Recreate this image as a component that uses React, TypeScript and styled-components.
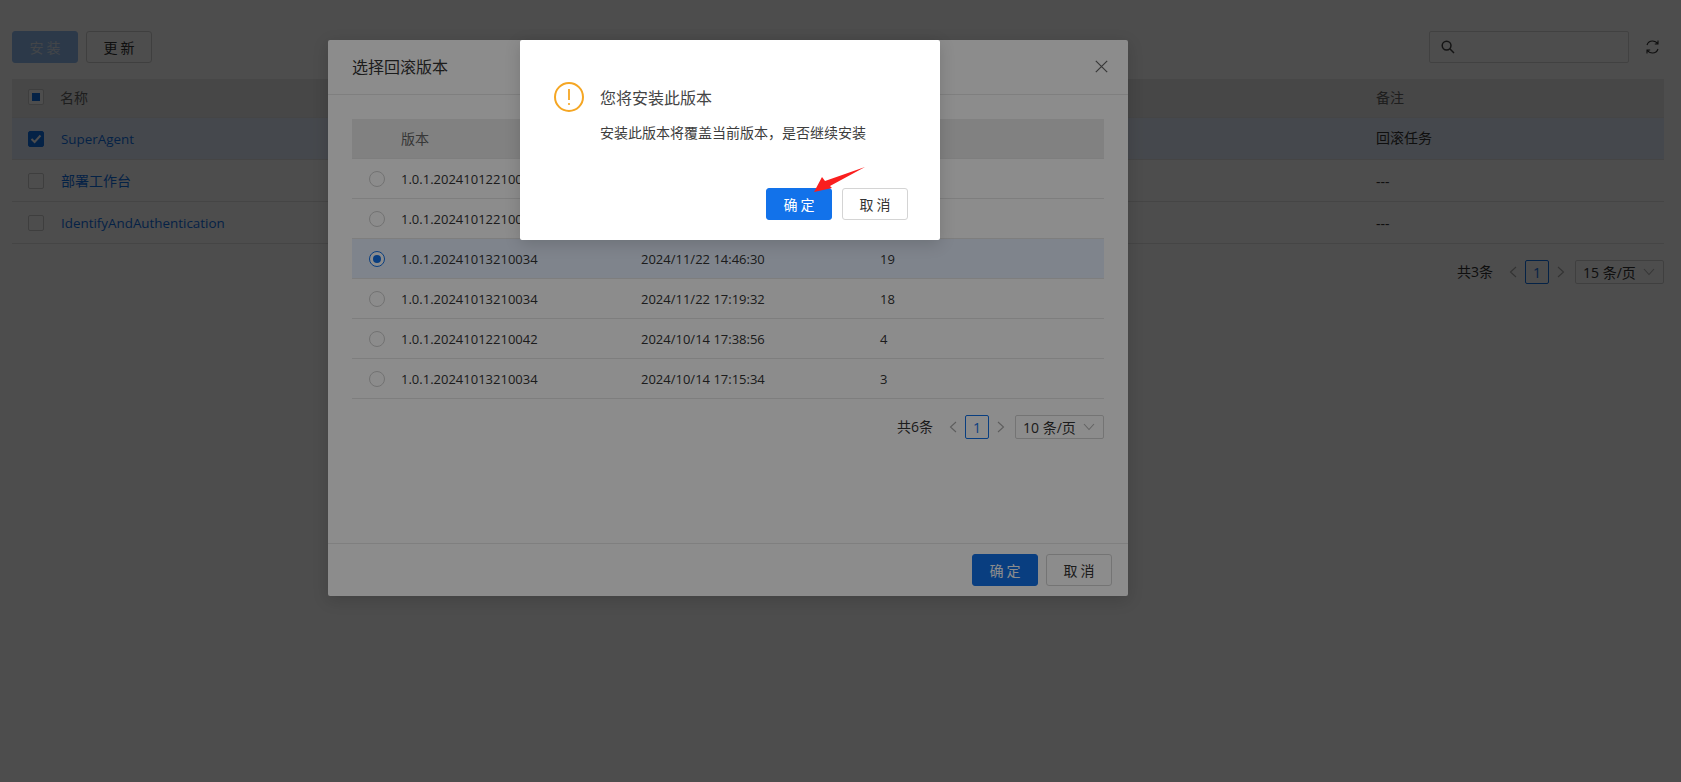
import React from "react";
import styled, { createGlobalStyle } from "styled-components";

const FONT = `"Open Sans", "Noto Sans CJK SC", sans-serif`;
const BLUE = "#1272ea";

const Global = createGlobalStyle`
  html, body { margin: 0; padding: 0; background: #fff; }
  body { font-family: ${FONT}; font-size: 14px; color: #333; }
  * { box-sizing: border-box; }
`;

const Screen = styled.div`
  position: relative;
  width: 1681px;
  height: 782px;
  overflow: hidden;
  background: #fff;
`;

const Page = styled.main`
  padding: 31px 17px 0 12px;
`;

const Toolbar = styled.div`
  display: flex;
  align-items: center;
  gap: 8px;
  height: 32px;
  margin-bottom: 16px;
`;

const Btn = styled.button<{ $primary?: boolean; $disabled?: boolean }>`
  width: 66px;
  height: 32px;
  padding: 0;
  border-radius: 3px;
  border: 1px solid ${(p) => (p.$primary ? BLUE : "#d4d4d4")};
  background: ${(p) => (p.$primary ? BLUE : "#fff")};
  color: ${(p) => (p.$disabled ? "#b8cbe2" : p.$primary ? "#fff" : "#333")};
  font-family: ${FONT};
  font-size: 14px;
  letter-spacing: 3px;
  text-indent: 3px;
  opacity: ${(p) => (p.$disabled ? 0.45 : 1)};
`;

const Spacer = styled.div`
  flex: 1;
`;

const SearchBox = styled.div`
  width: 200px;
  height: 32px;
  border: 1px solid #d9d9d9;
  border-radius: 2px;
  display: flex;
  align-items: center;
  padding-left: 11px;
  color: #444;
`;

const RefreshWrap = styled.div`
  width: 27px;
  display: flex;
  justify-content: flex-end;
  padding-right: 5px;
  color: #333;
`;

const Table = styled.div`
  width: 100%;
`;

const Row = styled.div<{ $head?: boolean; $active?: boolean; $h: number }>`
  display: flex;
  align-items: center;
  height: ${(p) => p.$h}px;
  padding-bottom: ${(p) => (p.$head ? 2 : 0)}px;
  border-bottom: 1px solid #e6e6e6;
  background: ${(p) => (p.$head ? "#ebebeb" : p.$active ? "#e7f1ff" : "transparent")};
  color: ${(p) => (p.$head ? "#666" : "#333")};
`;

const ModalHeadRow = styled(Row)`
  padding-bottom: 0;
`;

const CheckCell = styled.div`
  width: 48px;
  padding-left: 16px;
  display: flex;
  align-items: center;
`;

const NameCell = styled.div`
  flex: 1;
`;

const NoteCell = styled.div<{ $dash?: boolean; $lift?: boolean }>`
  width: 288px;
  padding-top: ${(p) => (p.$dash ? 2 : 0)}px;
  padding-bottom: ${(p) => (p.$lift ? 3 : 0)}px;
`;

const Link = styled.span<{ $latin?: boolean }>`
  display: inline-block;
  color: ${BLUE};
  font-size: ${(p) => (p.$latin ? 13.4 : 14)}px;
  margin-left: 1px;
  padding-bottom: ${(p) => (p.$latin ? 0 : 2)}px;
`;

const Check = styled.span<{ $state?: "on" | "half" }>`
  position: relative;
  width: 16px;
  height: 16px;
  border-radius: 2px;
  border: 1px solid ${(p) => (p.$state === "on" ? BLUE : "#d0d0d0")};
  background: ${(p) => (p.$state === "on" ? BLUE : "#fff")};
  display: flex;
  align-items: center;
  justify-content: center;
`;

const HalfMark = styled.span`
  width: 8px;
  height: 8px;
  background: ${BLUE};
`;

const Pager = styled.div`
  display: flex;
  align-items: center;
  justify-content: flex-end;
  height: 24px;
  color: #333;
`;

const PagerTotal = styled.span`
  margin-right: 8px;
  line-height: 24px;
`;

const Chevron = styled.span`
  width: 24px;
  display: flex;
  justify-content: center;
  color: #aaa;
`;

const PageNo = styled.span`
  width: 24px;
  height: 24px;
  border: 1px solid ${BLUE};
  border-radius: 2px;
  color: ${BLUE};
  display: flex;
  align-items: center;
  justify-content: center;
`;

const SizeSelect = styled.div`
  width: 89px;
  height: 24px;
  margin-left: 2px;
  border: 1px solid #d4d4d4;
  border-radius: 2px;
  display: flex;
  align-items: center;
  justify-content: space-between;
  padding: 0 8px 0 7px;
  white-space: nowrap;
`;

const MainPager = styled(Pager)`
  margin-top: 16px;
`;

const Mask = styled.div`
  position: absolute;
  inset: 0;
  background: rgba(0, 0, 0, 0.45);
`;

const Dialog = styled.section`
  position: absolute;
  left: 328px;
  top: 40px;
  width: 800px;
  height: 556px;
  background: #fff;
  border-radius: 2px;
  box-shadow: 0 4px 16px rgba(0, 0, 0, 0.15);
  display: flex;
  flex-direction: column;
`;

const DialogHead = styled.header`
  height: 55px;
  flex: none;
  padding: 0 20px 2px 24px;
  display: flex;
  align-items: center;
  justify-content: space-between;
  border-bottom: 1px solid #e8e8e8;
  font-size: 16px;
  color: #333;
`;

const CloseIcon = styled.span`
  display: flex;
  color: #666;
`;

const DialogBody = styled.div`
  flex: 1;
  padding: 24px 24px 0;
`;

const DialogFoot = styled.footer`
  height: 53px;
  flex: none;
  padding: 10px 16px 0 0;
  display: flex;
  justify-content: flex-end;
  gap: 8px;
  border-top: 1px solid #e8e8e8;
`;

const RadioCell = styled.div`
  width: 49px;
  padding-left: 17px;
  display: flex;
  align-items: center;
`;

const Radio = styled.span<{ $on?: boolean }>`
  width: 16px;
  height: 16px;
  border-radius: 50%;
  border: 1px solid ${(p) => (p.$on ? BLUE : "#d0d0d0")};
  background: #fff;
  display: flex;
  align-items: center;
  justify-content: center;
`;

const RadioDot = styled.span`
  width: 8px;
  height: 8px;
  border-radius: 50%;
  background: ${BLUE};
`;

const VersionCell = styled.div`
  width: 240px;
`;

const VersionHead = styled(VersionCell)`
  padding-bottom: 2px;
`;

const DateCell = styled.div`
  width: 239px;
`;

const Num = styled.span`
  font-size: 13px;
`;

const NumCell = styled.div`
  flex: 1;
`;

const ModalPager = styled(Pager)`
  margin-top: 16px;
`;

const Confirm = styled.section`
  position: absolute;
  left: 520px;
  top: 40px;
  width: 420px;
  height: 200px;
  background: #fff;
  border-radius: 2px;
  padding: 42px 32px 0;
  box-shadow: 0 4px 16px rgba(0, 0, 0, 0.15);
`;

const ConfirmHead = styled.div`
  display: flex;
  align-items: center;
  gap: 16px;
  height: 30px;
  font-size: 16px;
  color: #444;
`;

const ConfirmText = styled.p`
  margin: 10px 0 0 48px;
  line-height: 22px;
  font-size: 14px;
  color: #3d3d3d;
`;

const ConfirmFoot = styled.div`
  display: flex;
  justify-content: flex-end;
  gap: 10px;
  margin-top: 44px;
`;

const ArrowMark = styled.svg`
  position: absolute;
  left: 290px;
  top: 122px;
  overflow: visible;
`;

const ChevronL = () => (
  <svg width="8" height="12" viewBox="0 0 8 12" fill="none" stroke="currentColor" strokeWidth="1.1">
    <path d="M7 1 L1.5 6 L7 11" />
  </svg>
);
const ChevronR = () => (
  <svg width="8" height="12" viewBox="0 0 8 12" fill="none" stroke="currentColor" strokeWidth="1.1">
    <path d="M1 1 L6.5 6 L1 11" />
  </svg>
);
const ChevronD = () => (
  <svg width="12" height="8" viewBox="0 0 12 8" fill="none" stroke="#b5b5b5" strokeWidth="1.1">
    <path d="M1 1 L6 6.5 L11 1" />
  </svg>
);

const PagerBar: React.FC<{ total: number; size: number }> = ({ total, size }) => (
  <>
    <PagerTotal>共{total}条</PagerTotal>
    <Chevron><ChevronL /></Chevron>
    <PageNo>1</PageNo>
    <Chevron><ChevronR /></Chevron>
    <SizeSelect>
      <span>{size} 条/页</span>
      <ChevronD />
    </SizeSelect>
  </>
);

const mainRows = [
  { name: "SuperAgent", latin: true, note: "回滚任务", on: true },
  { name: "部署工作台", latin: false, note: "---", on: false },
  { name: "IdentifyAndAuthentication", latin: true, note: "---", on: false },
];

const versions = [
  { v: "1.0.1.20241012210042", d: "", n: "" },
  { v: "1.0.1.20241012210042", d: "", n: "" },
  { v: "1.0.1.20241013210034", d: "2024/11/22 14:46:30", n: "19", on: true },
  { v: "1.0.1.20241013210034", d: "2024/11/22 17:19:32", n: "18" },
  { v: "1.0.1.20241012210042", d: "2024/10/14 17:38:56", n: "4" },
  { v: "1.0.1.20241013210034", d: "2024/10/14 17:15:34", n: "3" },
];

export default function App() {
  return (
    <Screen>
      <Global />
      <Page>
        <Toolbar>
          <Btn $primary $disabled>安装</Btn>
          <Btn>更新</Btn>
          <Spacer />
          <SearchBox>
            <svg width="14" height="14" viewBox="0 0 14 14" fill="none" stroke="currentColor" strokeWidth="1.5">
              <circle cx="5.6" cy="5.6" r="4.4" />
              <path d="M8.8 8.8 L13 13" />
            </svg>
          </SearchBox>
          <RefreshWrap>
            <svg width="13" height="16" viewBox="0 0 13 16" fill="none" stroke="currentColor" strokeWidth="1.1">
              <path d="M1 6 C2 3 4 2 6.5 2 C8.5 2 10.5 3 12 5 M12 1.5 V5 H8.8" />
              <path d="M12 10 C11 13 9 14 6.5 14 C4.5 14 2.5 13 1 11 M1 14.5 V11 H4.2" />
            </svg>
          </RefreshWrap>
        </Toolbar>
        <Table>
          <Row $head $h={39}>
            <CheckCell><Check $state="half"><HalfMark /></Check></CheckCell>
            <NameCell>名称</NameCell>
            <NoteCell>备注</NoteCell>
          </Row>
          {mainRows.map((r) => (
            <Row key={r.name} $h={42} $active={r.on}>
              <CheckCell>
                <Check $state={r.on ? "on" : undefined}>
                  {r.on && (
                    <svg width="12" height="10" viewBox="0 0 12 10" fill="none" stroke="#fff" strokeWidth="2">
                      <path d="M1.5 5 L4.6 8 L10.5 1.5" />
                    </svg>
                  )}
                </Check>
              </CheckCell>
              <NameCell><Link $latin={r.latin}>{r.name}</Link></NameCell>
              <NoteCell $dash={!r.on} $lift={r.on}>{r.note}</NoteCell>
            </Row>
          ))}
        </Table>
        <MainPager><PagerBar total={3} size={15} /></MainPager>
      </Page>

      <Mask />
      <Dialog>
        <DialogHead>
          <span>选择回滚版本</span>
          <CloseIcon>
            <svg width="13" height="13" viewBox="0 0 13 13" fill="none" stroke="currentColor" strokeWidth="1.2">
              <path d="M0.8 0.8 L12.2 12.2 M12.2 0.8 L0.8 12.2" />
            </svg>
          </CloseIcon>
        </DialogHead>
        <DialogBody>
          <Table>
            <ModalHeadRow $head $h={40}>
              <RadioCell />
              <VersionHead>版本</VersionHead>
            </ModalHeadRow>
            {versions.map((r, i) => (
              <Row key={i} $h={40} $active={r.on}>
                <RadioCell>
                  <Radio $on={r.on}>{r.on && <RadioDot />}</Radio>
                </RadioCell>
                <VersionCell><Num>{r.v}</Num></VersionCell>
                <DateCell><Num>{r.d}</Num></DateCell>
                <NumCell><Num>{r.n}</Num></NumCell>
              </Row>
            ))}
          </Table>
          <ModalPager><PagerBar total={6} size={10} /></ModalPager>
        </DialogBody>
        <DialogFoot>
          <Btn $primary>确定</Btn>
          <Btn>取消</Btn>
        </DialogFoot>
      </Dialog>

      <Mask />
      <Confirm>
        <ConfirmHead>
          <svg width="32" height="32" viewBox="0 0 32 32" fill="none">
            <circle cx="17" cy="16" r="14" stroke="#f5a623" strokeWidth="2" />
            <path d="M17 8 V19" stroke="#f5a623" strokeWidth="1.8" />
            <circle cx="17" cy="23" r="1.1" fill="#f5a623" />
          </svg>
          <span>您将安装此版本</span>
        </ConfirmHead>
        <ConfirmText>安装此版本将覆盖当前版本，是否继续安装</ConfirmText>
        <ConfirmFoot>
          <Btn $primary>确定</Btn>
          <Btn>取消</Btn>
        </ConfirmFoot>
        <ArrowMark width="56" height="30" viewBox="0 0 56 30">
          <polygon points="4,30 12,15 15,19 55,5 20,24 22,26" fill="#fa1e1e" />
        </ArrowMark>
      </Confirm>
    </Screen>
  );
}
